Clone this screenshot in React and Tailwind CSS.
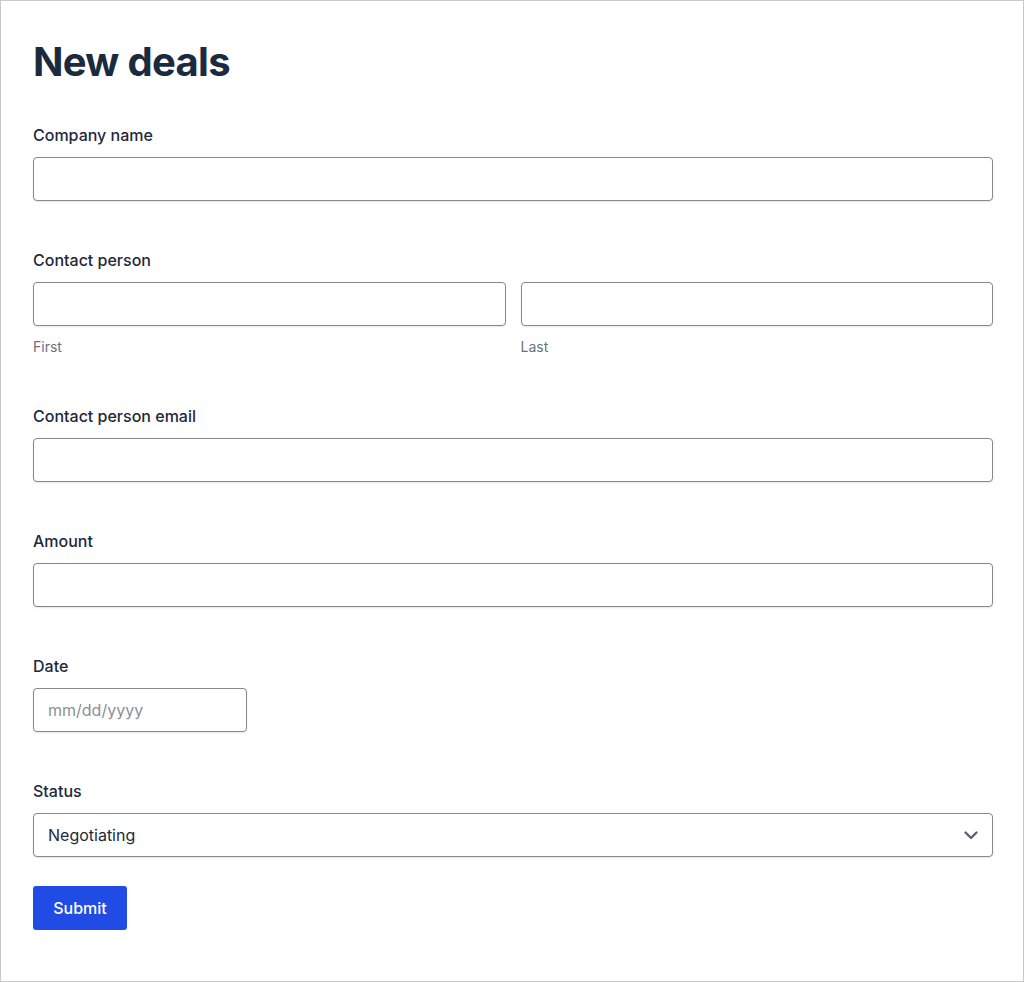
import React from "react";

function Label({ children }) {
  return <div className="text-[16px] leading-[24px] font-medium text-[#1e293b] mb-[10px]">{children}</div>;
}

const inputCls =
  "block w-full h-[44px] rounded-[4px] border border-[#85888e] bg-white shadow-[0_1px_2px_rgba(0,0,0,0.1)] px-[14px] text-[16px] text-[#1e293b] outline-none";

export default function App() {
  return (
    <div className="w-[1024px] h-[982px] border border-[#c9c9c9] bg-white box-border" style={{ fontFamily: "Inter, 'Noto Sans', sans-serif" }}>
      <div className="pl-[32px] pr-[30px] pt-[37px]">
        <h1 className="text-[40px] leading-[48px] font-bold text-[#1b2a3e] tracking-[-0.7px]">New deals</h1>
        <form className="mt-[37px]" onSubmit={(e) => e.preventDefault()}>
          <div className="mb-[47px]">
            <Label>Company name</Label>
            <input className={inputCls} type="text" />
          </div>
          <div className="mb-[47px]">
            <Label>Contact person</Label>
            <div className="flex gap-[15px]">
              <div className="flex-1">
                <input className={inputCls} type="text" />
                <div className="mt-[11px] text-[14px] leading-[20px] text-[#6b7280]">First</div>
              </div>
              <div className="flex-1">
                <input className={inputCls} type="text" />
                <div className="mt-[11px] text-[14px] leading-[20px] text-[#6b7280]">Last</div>
              </div>
            </div>
          </div>
          <div className="mb-[47px]">
            <Label>Contact person email</Label>
            <input className={inputCls} type="text" />
          </div>
          <div className="mb-[47px]">
            <Label>Amount</Label>
            <input className={inputCls} type="text" />
          </div>
          <div className="mb-[47px]">
            <Label>Date</Label>
            <div className="w-[214px] h-[44px] rounded-[4px] border border-[#85888e] bg-white shadow-[0_1px_2px_rgba(0,0,0,0.1)] px-[14px] flex items-center text-[16px] text-[#8b8f96]">
              mm/dd/yyyy
            </div>
          </div>
          <div className="mb-[29px]">
            <Label>Status</Label>
            <div className="w-full h-[44px] rounded-[4px] border border-[#85888e] bg-white shadow-[0_1px_2px_rgba(0,0,0,0.1)] pl-[14px] pr-[13px] flex items-center justify-between text-[16px] text-[#1e293b]">
              <span>Negotiating</span>
              <svg width="16" height="16" viewBox="0 0 16 16" fill="none">
                <path d="M2.5 5.5l5.5 5.5 5.5-5.5" stroke="#5b6270" strokeWidth="2.4" strokeLinecap="round" strokeLinejoin="round" />
              </svg>
            </div>
          </div>
          <button type="submit" className="h-[44px] w-[94px] rounded-[3px] bg-[#204ce5] text-white text-[16px] font-medium">
            Submit
          </button>
        </form>
      </div>
    </div>
  );
}
